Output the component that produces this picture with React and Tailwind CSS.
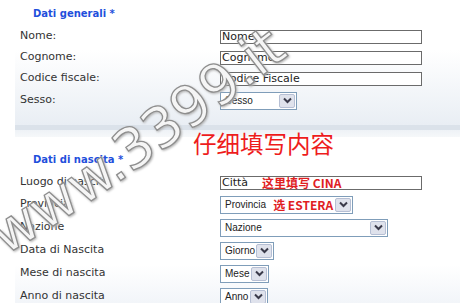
import React from 'react';

const Chevron = () => (
  <svg width="9" height="7" viewBox="0 0 9 7">
    <path d="M1 1.5 L4.5 5 L8 1.5" fill="none" stroke="#3a3a4a" strokeWidth="2" />
  </svg>
);

const Select = ({ label, width, children }) => (
  <div
    className="flex h-[18px] items-center justify-between border border-[#7f9db9] bg-white pl-[4px] pr-px"
    style={{ width }}
  >
    <span className="flex items-center gap-[7px] whitespace-nowrap font-['Liberation_Sans',sans-serif] text-[10px] text-[#222]">
      {label}
      {children}
    </span>
    <span className="flex h-[14px] w-[16px] items-center justify-center rounded-[2px] border border-[#b6bfd4] bg-[#dfe2ec]">
      <Chevron />
    </span>
  </div>
);

const TextBox = ({ value, children }) => (
  <div className="flex h-[14px] w-[202px] items-center gap-[14px] whitespace-nowrap border border-[#6b6b6b] bg-white pl-px text-[11px] leading-none text-[#222]">
    {value}
    {children}
  </div>
);

const Row = ({ label, h, children }) => (
  <div className={`grid grid-cols-[205px_1fr] items-center ${h}`}>
    <span className="pl-[5px] text-[11px] text-[#333]">{label}</span>
    <div>{children}</div>
  </div>
);

const Red = ({ children }) => (
  <span className="font-['Noto_Sans_CJK_SC',sans-serif] text-[12px] font-bold text-[#e0201f]">{children}</span>
);

// watermark del sito, testo lungo una curva
const Watermark = () => (
  <svg className="pointer-events-none absolute inset-0 [filter:drop-shadow(1px_1px_1px_#b0b0b0)]" width="460" height="303" viewBox="0 0 460 303">
    <defs>
      <path id="wm" d="M5 255 Q 112 195 331 22" />
    </defs>
    <text
      fontFamily="DejaVu Sans, sans-serif"
      fontSize="56"
      fill="#f5f5f5"
      stroke="#8e8e8e"
      strokeWidth="1.3"
    >
      <textPath href="#wm">www.3399.it</textPath>
    </text>
  </svg>
);

export default function App() {
  return (
    <div className="relative h-[303px] w-[460px] overflow-hidden bg-white font-['DejaVu_Sans',sans-serif]">
      {/* Dati generali */}
      <div className="ml-[15px] h-[125px] bg-[linear-gradient(to_bottom,#ffffff_0%,#ffffff_40%,#e9eef4_100%)]">
        <div className="flex h-[26px] items-center pl-[18px] text-[10px] font-bold text-[#1f4fdc]">Dati generali *</div>
        <Row label="Nome:" h="h-[21px]"><TextBox value="Nome" /></Row>
        <Row label="Cognome:" h="h-[21px]"><TextBox value="Cognome" /></Row>
        <Row label="Codice fiscale:" h="h-[21px]"><TextBox value="Codice Fiscale" /></Row>
        <Row label="Sesso:" h="h-[23px]"><Select label="Sesso" width={77} /></Row>
      </div>

      {/* separatore + nota */}
      <div className="ml-[15px] h-[25px] bg-[linear-gradient(to_bottom,#dbe2ea_0,#dbe2ea_5px,#eef2f6_5px,#f6f8fa_12px,#ffffff_12px)]">
        <div className="pl-[178px] pt-[7px] font-['Noto_Sans_CJK_SC',sans-serif] text-[23.5px] leading-none text-[#ee1c1c]">仔细填写内容</div>
      </div>

      {/* Dati di nascita */}
      <div className="ml-[15px] h-[153px] bg-[linear-gradient(to_bottom,#ffffff_0%,#ffffff_75%,#f2f5f9_100%)]">
        <div className="flex h-[22px] items-start pl-[18px] pt-[2px] text-[10px] font-bold text-[#1f4fdc]">Dati di nascita *</div>
        <Row label="Luogo di nascita" h="h-[21px]"><TextBox value="Città"><Red>这里填写 CINA</Red></TextBox></Row>
        <Row label="Provincia" h="h-[23px]"><Select label="Provincia" width={133}><Red>选 ESTERA</Red></Select></Row>
        <Row label="Nazione" h="h-[23px]"><Select label="Nazione" width={168} /></Row>
        <Row label="Data di Nascita" h="h-[23px]"><Select label="Giorno" width={54} /></Row>
        <Row label="Mese di nascita" h="h-[23px]"><Select label="Mese" width={49} /></Row>
        <Row label="Anno di nascita" h="h-[23px]"><Select label="Anno" width={48} /></Row>
      </div>

      <Watermark />
    </div>
  );
}
